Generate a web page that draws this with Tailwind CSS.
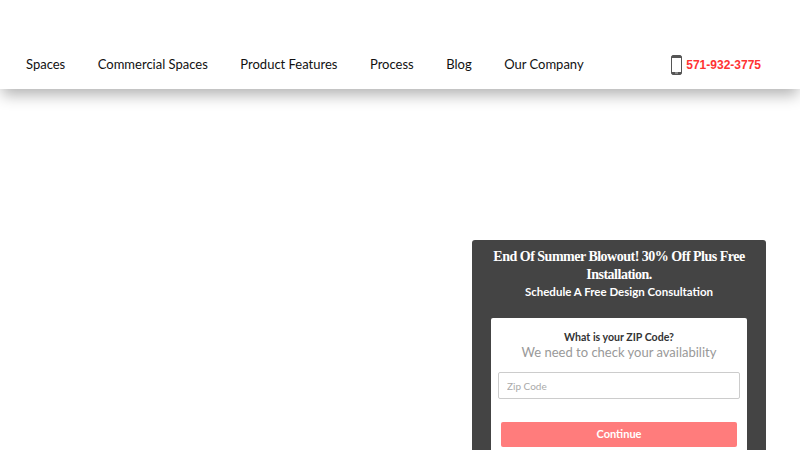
<!DOCTYPE html>
<html lang="en">
<head>
<meta charset="UTF-8" />
<title>Spaces</title>
<script src="https://cdn.jsdelivr.net/npm/@tailwindcss/browser@4"></script>
</head>
<body class="bg-white h-[450px] overflow-hidden font-['Lato',sans-serif]">
    <!-- Header -->
    <header class="h-[89px] bg-white shadow-[0_8px_14px_-2px_rgba(0,0,0,0.3)] flex items-end justify-between pl-[26px] pr-[39px] pb-[15px]">
        <nav class="flex gap-[32.5px] text-[13px] leading-5 text-[#111]">
            <a>Spaces</a>
            <a>Commercial Spaces</a>
            <a>Product Features</a>
            <a>Process</a>
            <a>Blog</a>
            <a>Our Company</a>
        </nav>
        <div class="flex items-center gap-[4px] -mb-[1px]">
            <svg width="11" height="20" viewBox="0 0 11 20">
                <rect x="0.5" y="0.5" width="10" height="19" rx="1.5" fill="#fff" stroke="#555" />
                <rect x="1" y="1" width="9" height="2" fill="#555" />
                <rect x="1" y="17" width="9" height="2" fill="#555" />
                <rect x="4" y="17.5" width="3" height="1" fill="#bbb" />
            </svg>
            <span class="font-['Liberation_Sans',sans-serif] font-bold text-[12px] text-[#ff3333]">571-932-3775</span>
        </div>
    </header>

    <!-- Lead form card -->
    <div class="flex justify-end pr-[34px] pt-[151px]">
        <div class="w-[294px] h-[230px] bg-[#444444] rounded-t-[3px] px-[19px] text-white text-center">
            <h2 class="font-['Liberation_Serif',serif] font-bold text-[14px] tracking-[-0.5px] leading-[18px] pt-[8px]">End Of Summer Blowout! 30% Off Plus Free Installation.</h2>
            <p class="text-[11.5px] font-bold leading-[16px] tracking-normal">Schedule A Free Design Consultation</p>
            <div class="mt-[18px] h-[140px] bg-white rounded-t-[2px] px-[7px] pt-[12px]">
                <p class="text-[10.6px] font-bold leading-[15px] text-[#333]">What is your ZIP Code?</p>
                <p class="text-[13px] leading-[15px] text-[#999]">We need to check your availability</p>
                <input type="text" placeholder="Zip Code" class="block w-full h-[27px] mt-[12px] border border-[#ccc] rounded-[2px] px-[8px] text-[10px] placeholder:text-[#aaa]" />
                <button class="block w-[236px] h-[25px] mx-auto mt-[23px] bg-[#ff7c7c] rounded-[2px] text-white text-[11px] font-bold">Continue</button>
            </div>
        </div>
    </div>
</body>
</html>
